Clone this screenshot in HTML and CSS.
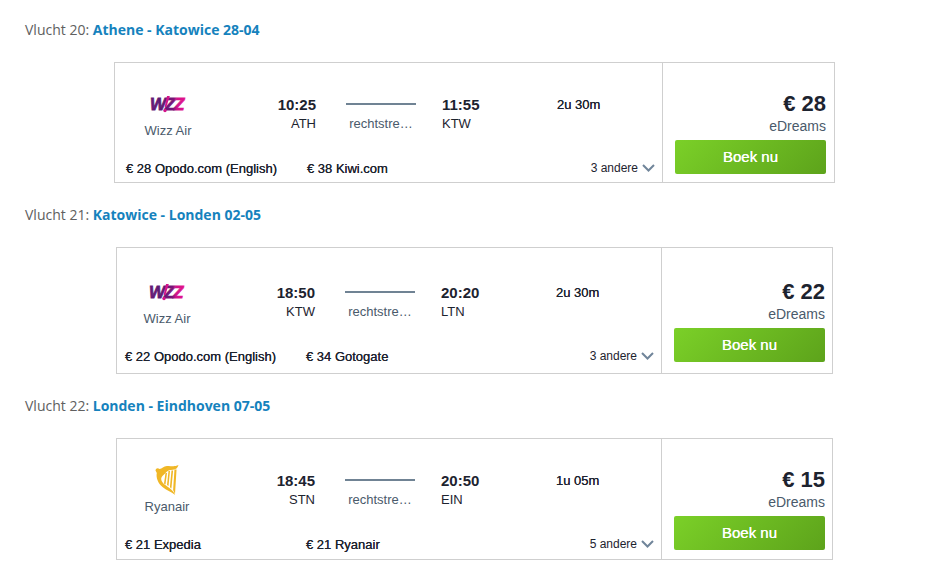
FILE: index.html
```html
<!DOCTYPE html>
<html lang="nl">
<head>
<meta charset="UTF-8" />
<meta name="viewport" content="width=device-width, initial-scale=1.0"/>
<title>Vluchten</title>
<link rel="stylesheet" href="styles.css">
</head>
<body>
  <svg class="defs" width="0" height="0" aria-hidden="true">
    <defs>
      <linearGradient id="wizzFill" gradientUnits="userSpaceOnUse" x1="0" y1="0" x2="36" y2="0">
        <stop offset="0" stop-color="#6a1a78"/>
        <stop offset="0.3" stop-color="#5c1a72"/>
        <stop offset="0.65" stop-color="#7a1478"/>
        <stop offset="0.75" stop-color="#d0128a"/>
        <stop offset="1" stop-color="#e4128a"/>
      </linearGradient>
      <symbol id="wizz" viewBox="0 0 36 18">
        <g font-family="Liberation Sans, sans-serif" font-weight="bold" font-style="italic" font-size="17" fill="url(#wizzFill)" stroke="url(#wizzFill)" stroke-width="0.8">
          <text x="0" y="15">W</text>
          <text x="15" y="15">Z</text>
          <text x="24" y="15">Z</text>
        </g>
        <path d="M14.600 12 17 1h2.800l-3.400 11z" fill="#d3138a"/>
        <circle cx="15" cy="15.500" r="1.700" fill="#d3138a"/>
      </symbol>
      <symbol id="harp" viewBox="0 0 24 32">
        <g fill="#f0b726">
          <path d="M.5 6.500C.8 4 3 3.500 4.500 5C7 4.500 8.500 2.500 12 2C15.500 1.500 19 3.200 23.500 1C22.500 4 21 5.500 18 5.700C14.500 6 12.500 6.500 10.500 9C8.500 11.500 6.500 12 6.200 14.500C6 18 9.500 20.500 13 23C16.500 25.500 19 27.500 20.200 31C16 27.500 11.500 26.500 7.500 23C3 19.300 .8 13.500 1.800 9Z"/>
          <path d="M10.500 9h1.500L10.500 20.500 9 19.500z"/>
          <path d="M13.500 7h1.500l-1.500 15-1.500-1z"/>
          <path d="M16.500 6.500h1.600l-1.700 18-1.500-1.200z"/>
          <path d="M19.500 5.500h2L20 30l-1.900-4z"/>
        </g>
      </symbol>
      <symbol id="chevron" viewBox="0 0 13 8">
        <path d="M1 1l5.500 5.500L12 1" fill="none" stroke="#70859a" stroke-width="2"/>
      </symbol>
    </defs>
  </svg>

  <p class="title">Vlucht 20: <a href="#vlucht20">Athene - Katowice 28-04</a></p>
  <div class="flight" id="vlucht20">
    <div class="main">
      <div class="leg">
        <div class="carrier">
          <div class="logo"><svg width="36" height="18" aria-hidden="true"><use href="#wizz"/></svg></div>
          <span>Wizz Air</span>
        </div>
        <div class="stop depart"><strong>10:25</strong><span>ATH</span></div>
        <div class="route"><span>rechtstre…</span></div>
        <div class="stop"><strong>11:55</strong><span>KTW</span></div>
        <div class="duration">2u 30m</div>
      </div>
      <div class="offers">
        <a href="#">€ 28 Opodo.com (English)</a>
        <a href="#">€ 38 Kiwi.com</a>
        <button class="more" type="button">3 andere <svg width="13" height="8" aria-hidden="true"><use href="#chevron"/></svg></button>
      </div>
    </div>
    <div class="side">
      <strong class="price">€ 28</strong>
      <span class="seller">eDreams</span>
      <button class="book" type="button">Boek nu</button>
    </div>
  </div>

  <p class="title">Vlucht 21: <a href="#vlucht21">Katowice - Londen 02-05</a></p>
  <div class="flight narrow tall" id="vlucht21">
    <div class="main">
      <div class="leg">
        <div class="carrier">
          <div class="logo"><svg width="36" height="18" aria-hidden="true"><use href="#wizz"/></svg></div>
          <span>Wizz Air</span>
        </div>
        <div class="stop depart"><strong>18:50</strong><span>KTW</span></div>
        <div class="route"><span>rechtstre…</span></div>
        <div class="stop"><strong>20:20</strong><span>LTN</span></div>
        <div class="duration">2u 30m</div>
      </div>
      <div class="offers">
        <a href="#">€ 22 Opodo.com (English)</a>
        <a href="#">€ 34 Gotogate</a>
        <button class="more" type="button">3 andere <svg width="13" height="8" aria-hidden="true"><use href="#chevron"/></svg></button>
      </div>
    </div>
    <div class="side">
      <strong class="price">€ 22</strong>
      <span class="seller">eDreams</span>
      <button class="book" type="button">Boek nu</button>
    </div>
  </div>

  <p class="title">Vlucht 22: <a href="#vlucht22">Londen - Eindhoven 07-05</a></p>
  <div class="flight narrow" id="vlucht22">
    <div class="main">
      <div class="leg">
        <div class="carrier">
          <div class="logo"><svg width="24" height="32" aria-hidden="true"><use href="#harp"/></svg></div>
          <span>Ryanair</span>
        </div>
        <div class="stop depart"><strong>18:45</strong><span>STN</span></div>
        <div class="route"><span>rechtstre…</span></div>
        <div class="stop"><strong>20:50</strong><span>EIN</span></div>
        <div class="duration">1u 05m</div>
      </div>
      <div class="offers">
        <a href="#">€ 21 Expedia</a>
        <a href="#">€ 21 Ryanair</a>
        <button class="more" type="button">5 andere <svg width="13" height="8" aria-hidden="true"><use href="#chevron"/></svg></button>
      </div>
    </div>
    <div class="side">
      <strong class="price">€ 15</strong>
      <span class="seller">eDreams</span>
      <button class="book" type="button">Boek nu</button>
    </div>
  </div>
</body>
</html>
```
FILE: styles.css
```css
:root {
  --ink: #1d232f;
  --muted: #4a5a6b;
  --line: #cfcfcf;
  --link: #1582bd;
  --font: "Liberation Sans", Arial, sans-serif;
}

* {
  box-sizing: border-box;
}

body {
  margin: 0;
  padding: 18px 28px 20px 25px;
  background: #fff;
  color: var(--ink);
  font-family: var(--font);
  font-size: 13px;
  line-height: 18px;
}

.defs {
  display: block;
}

.title {
  margin: 0 0 20px;
  font-family: "Open Sans", sans-serif;
  font-size: 14px;
  line-height: 24px;
  color: #606060;
}

.title a {
  color: var(--link);
  font-weight: bold;
  text-decoration: none;
}

.flight {
  --top: 0px;
  --bottom: 0px;
  --left: 11px;
  --right: 8px;
  display: flex;
  max-width: 721px;
  margin: 0 auto 20px;
  border: 1px solid var(--line);
}

.flight.narrow {
  --bottom: 1px;
  --left: 8px;
  --right: 7px;
  max-width: 717px;
}

.flight.tall {
  --top: 3px;
  --bottom: 3px;
}

.main {
  flex: 1;
  padding: calc(var(--top) + 25px) 7px 0 var(--left);
}

.leg {
  display: grid;
  grid-template-columns: 84px 80fr 74px 89fr 98fr;
  gap: 26px;
}

.carrier {
  color: var(--muted);
  text-align: center;
}

.logo {
  display: flex;
  align-items: center;
  justify-content: center;
  height: 32px;
  margin-bottom: 2px;
}

.stop, .route, .duration {
  padding-top: 7px;
}

.stop strong, .stop span {
  display: block;
}

.stop strong {
  font-size: 15px;
  line-height: 20px;
}

.depart {
  text-align: right;
}

.route {
  padding-left: 4px;
  color: var(--muted);
  text-align: center;
}

.route::before {
  content: "";
  display: block;
  height: 2px;
  margin: 8px 0 10px;
  background: #708394;
}

.duration {
  line-height: 20px;
}

/* a touch heavier than regular */
.duration, .offers a, .book {
  text-shadow: 0 0 0 currentColor;
}

.offers {
  display: grid;
  grid-template-columns: 155px 1fr auto;
  gap: 26px;
  margin-top: 20px;
}

.offers a {
  color: var(--ink);
  text-decoration: none;
  white-space: nowrap;
}

.more {
  display: flex;
  align-items: center;
  gap: 4px;
  padding: 0 0 2px;
  border: none;
  background: none;
  color: var(--ink);
  font-family: var(--font);
  font-size: 12px;
  line-height: 16px;
  cursor: pointer;
}

.side {
  display: flex;
  flex-direction: column;
  padding: calc(var(--top) + 28px) var(--right) calc(var(--bottom) + 8px) 12px;
  border-left: 1px solid var(--line);
  text-align: right;
}

.price {
  font-size: 22px;
  line-height: 26px;
}

.seller {
  margin-bottom: 5px;
  font-size: 14px;
  color: var(--muted);
}

.book {
  width: 151px;
  height: 34px;
  padding: 0 0 2px;
  border: none;
  border-radius: 2px;
  background: linear-gradient(135deg, #7bd028, #5da31b);
  color: #fff;
  font-family: var(--font);
  font-size: 15px;
  cursor: pointer;
}

.book:hover {
  background: #5da31b;
}
```
